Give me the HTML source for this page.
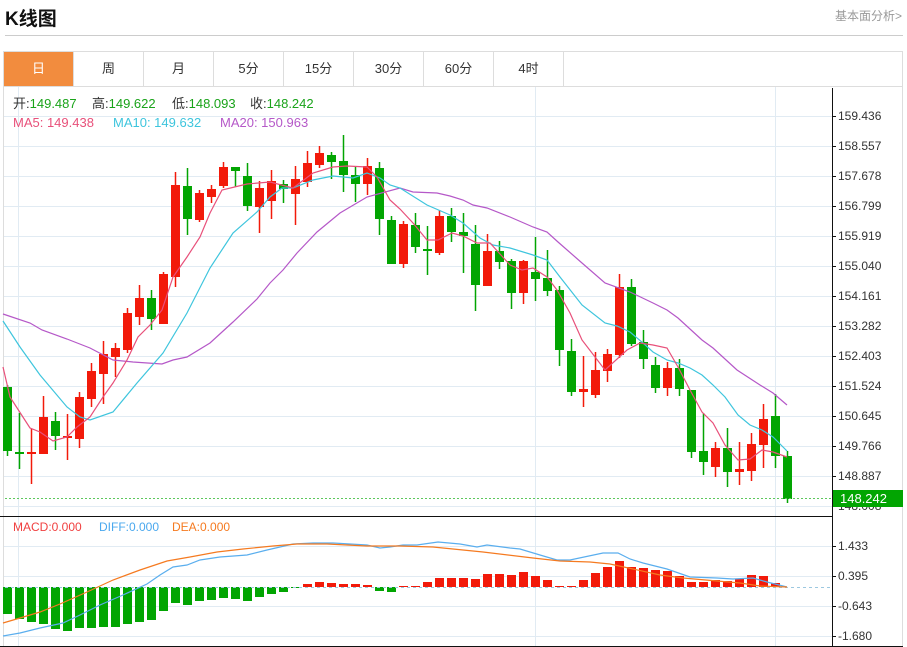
<!DOCTYPE html>
<html><head><meta charset="utf-8"><style>
*{margin:0;padding:0;box-sizing:border-box}
body{width:907px;height:647px;background:#fff;font-family:"Liberation Sans","Noto Sans CJK SC",sans-serif;position:relative;overflow:hidden}
.t{position:absolute;left:5px;top:4px;font-size:19px;font-weight:bold;color:#111}
.r{position:absolute;right:5px;top:7px;font-size:12px;color:#999}
.hl{position:absolute;left:5px;top:35px;width:898px;height:1px;background:#ccc}
.tabs{position:absolute;left:3px;top:51px;width:900px;height:36px;border:1px solid #ddd;border-bottom:1px solid #ddd}
.tab{position:absolute;top:0;height:34px;width:70px;line-height:34px;text-align:center;font-size:13px;color:#333;border-right:1px solid #ddd}
.on{background:#f28c3e;color:#fff}
</style></head><body>
<div class="t">K线图</div><div class="r">基本面分析&gt;</div><div class="hl"></div>
<div class="tabs">
<div class="tab on" style="left:0">日</div><div class="tab" style="left:70px">周</div><div class="tab" style="left:140px">月</div><div class="tab" style="left:210px">5分</div><div class="tab" style="left:280px">15分</div><div class="tab" style="left:350px">30分</div><div class="tab" style="left:420px">60分</div><div class="tab" style="left:490px">4时</div>
</div>
<svg width="907" height="647" style="position:absolute;left:0;top:0" font-family="Liberation Sans, Noto Sans CJK SC, sans-serif">
<g stroke="#e1ebf3" stroke-width="1">
<line x1="3.5" y1="87" x2="3.5" y2="647" stroke="#ddd"/><line x1="902.5" y1="87" x2="902.5" y2="647" stroke="#ddd"/>
<line x1="18.5" y1="87" x2="18.5" y2="646"/><line x1="535.5" y1="87" x2="535.5" y2="646"/><line x1="775.5" y1="87" x2="775.5" y2="646"/>
<line x1="4" y1="116.5" x2="832" y2="116.5"/><line x1="4" y1="146.5" x2="832" y2="146.5"/><line x1="4" y1="176.5" x2="832" y2="176.5"/><line x1="4" y1="206.5" x2="832" y2="206.5"/><line x1="4" y1="236.5" x2="832" y2="236.5"/><line x1="4" y1="266.5" x2="832" y2="266.5"/><line x1="4" y1="296.5" x2="832" y2="296.5"/><line x1="4" y1="326.5" x2="832" y2="326.5"/><line x1="4" y1="356.5" x2="832" y2="356.5"/><line x1="4" y1="386.5" x2="832" y2="386.5"/><line x1="4" y1="416.5" x2="832" y2="416.5"/><line x1="4" y1="446.5" x2="832" y2="446.5"/><line x1="4" y1="476.5" x2="832" y2="476.5"/><line x1="4" y1="506.5" x2="832" y2="506.5"/>
<line x1="4" y1="546.5" x2="832" y2="546.5"/><line x1="4" y1="576.5" x2="832" y2="576.5"/><line x1="4" y1="606.5" x2="832" y2="606.5"/><line x1="4" y1="636.5" x2="832" y2="636.5"/>
</g>
<g font-size="13">
<text x="13" y="108" fill="#333">开:<tspan fill="#1aa31a">149.487</tspan></text>
<text x="92" y="108" fill="#333">高:<tspan fill="#1aa31a">149.622</tspan></text>
<text x="172" y="108" fill="#333">低:<tspan fill="#1aa31a">148.093</tspan></text>
<text x="250" y="108" fill="#333">收:<tspan fill="#1aa31a">148.242</tspan></text>
<text x="13" y="127" fill="#e8507a">MA5: 149.438</text>
<text x="113" y="127" fill="#3ec5dd">MA10: 149.632</text>
<text x="220" y="127" fill="#b558c8">MA20: 150.963</text>
</g>
<g id="c"></g>
<polyline fill="none" stroke="#b558c8" stroke-width="1.2" points="3,314 30,323 42,330 67,339 90,348 113,360 133,362 162,364 173,360 187,357 210,343 233,322 257,299 270,283 283,270 297,253 317,232 340,213 367,197 400,188 413,192 437,193 450,196 463,200 473,205 487,208 510,217 533,227 547,232 558,242 582,263 605,283 630,292 653,303 667,310 678,318 702,340 713,348 737,370 760,385 773,393 787,405"/>
<polyline fill="none" stroke="#3ec5dd" stroke-width="1.2" points="3,321 20,347 40,375 67,407 80,417 90,420 113,412 137,383 163,353 187,313 210,268 233,233 257,212 270,197 282,188 293,188 313,180 333,176 353,178 367,173 380,178 390,185 400,188 427,205 450,215 463,223 480,238 493,245 510,248 533,255 547,260 560,277 582,305 605,323 617,326 630,332 643,343 653,352 667,360 678,363 690,368 702,375 713,385 725,397 738,415 750,425 762,430 773,437 787,451"/>
<polyline fill="none" stroke="#e8507a" stroke-width="1.2" points="3,367 10,397 30,428 40,432 53,441 67,437 77,427 90,417 103,397 113,383 127,360 138,337 150,325 162,310 173,277 187,257 200,237 210,213 222,190 247,184 270,182 293,188 313,173 333,167 347,166 367,167 377,177 390,200 400,209 413,223 427,240 438,240 452,233 463,236 477,243 490,243 510,265 522,270 533,268 547,277 557,290 570,313 582,340 605,370 627,350 640,343 653,345 667,348 678,367 690,390 702,412 713,423 725,445 738,460 750,459 762,450 773,452 787,457"/>
<line x1="5" y1="498.5" x2="832" y2="498.5" stroke="#5cc85c" stroke-dasharray="2,2"/>
<line x1="0" y1="516.5" x2="833" y2="516.5" stroke="#111"/>
<line x1="0" y1="646.5" x2="903" y2="646.5" stroke="#111"/>
<line x1="832.5" y1="88" x2="832.5" y2="647" stroke="#111"/>
<g font-size="12" fill="#333">
<text x="838" y="120">159.436</text><text x="838" y="150">158.557</text><text x="838" y="180">157.678</text><text x="838" y="210">156.799</text><text x="838" y="240">155.919</text><text x="838" y="270">155.040</text><text x="838" y="300">154.161</text><text x="838" y="330">153.282</text><text x="838" y="360">152.403</text><text x="838" y="390">151.524</text><text x="838" y="420">150.645</text><text x="838" y="450">149.766</text><text x="838" y="480">148.887</text><text x="838" y="510">148.008</text>
<text x="838" y="550">1.433</text><text x="838" y="580">0.395</text><text x="838" y="610">-0.643</text><text x="838" y="640">-1.680</text>
</g>
<g stroke="#111"><line x1="832" y1="116.5" x2="836" y2="116.5"/><line x1="832" y1="146.5" x2="836" y2="146.5"/><line x1="832" y1="176.5" x2="836" y2="176.5"/><line x1="832" y1="206.5" x2="836" y2="206.5"/><line x1="832" y1="236.5" x2="836" y2="236.5"/><line x1="832" y1="266.5" x2="836" y2="266.5"/><line x1="832" y1="296.5" x2="836" y2="296.5"/><line x1="832" y1="326.5" x2="836" y2="326.5"/><line x1="832" y1="356.5" x2="836" y2="356.5"/><line x1="832" y1="386.5" x2="836" y2="386.5"/><line x1="832" y1="416.5" x2="836" y2="416.5"/><line x1="832" y1="446.5" x2="836" y2="446.5"/><line x1="832" y1="476.5" x2="836" y2="476.5"/><line x1="832" y1="546.5" x2="836" y2="546.5"/><line x1="832" y1="576.5" x2="836" y2="576.5"/><line x1="832" y1="606.5" x2="836" y2="606.5"/><line x1="832" y1="636.5" x2="836" y2="636.5"/></g>
<rect x="833" y="490" width="70" height="17" fill="#02a502"/>
<text x="840" y="503" font-size="13" fill="#fff">148.242</text>
<g font-size="12">
<text x="13" y="531" fill="#f04040">MACD:0.000</text>
<text x="99" y="531" fill="#4aa8ee">DIFF:0.000</text>
<text x="172" y="531" fill="#f57a20">DEA:0.000</text>
</g>
<g id="m"></g>
<line x1="5" y1="587.5" x2="832" y2="587.5" stroke="#9cc8e0" stroke-dasharray="3,3"/>
<polyline fill="none" stroke="#5aaeee" stroke-width="1.2" points="3,636 20,633 40,628 63,623 80,615 100,605 123,595 147,584 160,575 173,567 187,565 200,560 220,557 247,555 267,550 293,544 313,543 333,543 367,545 380,548 390,547 403,545 417,545 438,542 460,544 477,547 487,545 510,548 520,549 540,555 557,560 570,560 603,553 618,553 630,559 643,563 667,569 690,577 717,578 733,579 753,578 767,582 787,587"/>
<polyline fill="none" stroke="#f57a20" stroke-width="1.2" points="3,623 20,618 40,612 60,604 87,592 113,580 140,570 167,561 190,557 217,552 243,549 273,546 297,544 327,544 367,546 400,546 433,547 483,552 533,558 560,561 590,562 610,564 633,569 660,575 683,578 717,581 740,583 760,586 787,587"/>
</svg>
<script>
var C=[
[7,'g',387,451,385,456],[19,'g',452,453,413,469],[31,'r',452,454,429,484],[43,'r',417,454,396,454],[55,'g',421,436,412,450],[67,'r',436,438,414,460],[79,'r',397,439,392,448],[91,'r',371,399,363,407],[103,'r',354,374,341,404],[115,'r',348,357,343,377],[127,'r',313,350,308,353],[139,'r',298,317,285,325],[151,'g',298,319,290,330],[163,'r',274,324,272,324],[175,'r',185,277,172,287],[187,'g',186,219,168,235],[199,'r',193,220,190,222],[211,'r',189,197,185,203],[223,'r',167,186,162,188],[235,'g',167,171,167,187],[247,'g',176,206,163,211],[259,'r',188,207,181,233],[271,'r',181,201,170,219],[283,'g',184,189,180,203],[295,'r',179,194,166,225],[307,'r',163,182,151,187],[319,'r',153,165,146,168],[331,'g',155,162,152,179],[343,'g',161,175,135,192],[355,'g',175,184,167,202],[367,'r',166,184,158,195],[379,'g',168,219,162,235],[391,'g',220,264,216,264],[403,'r',224,264,221,268],
[415,'g',225,247,213,253],[427,'g',249,251,226,275],[439,'r',216,253,210,255],[451,'g',216,232,208,242],[463,'g',232,236,213,273],[475,'g',244,285,225,311],[487,'r',251,286,234,286],[499,'g',251,262,241,269],[511,'g',261,293,259,309],[523,'r',261,293,260,304],[535,'g',272,279,237,301],[547,'g',278,291,250,296],[559,'g',290,350,286,366],[571,'g',351,392,339,396],[583,'r',389,392,356,407],[595,'r',370,395,352,398],[607,'r',354,371,349,382],[619,'r',287,355,274,358],[631,'g',287,344,279,346],[643,'g',342,359,330,369],[655,'g',365,388,357,393],[667,'r',368,388,362,396],[679,'g',368,389,359,396],[691,'g',390,452,390,458],[703,'g',451,462,413,475],[715,'r',448,467,442,477],[727,'g',448,472,428,487],[739,'r',469,472,442,485],[751,'r',444,471,433,481],[763,'r',419,445,404,468],[775,'g',416,456,394,468],[787,'g',456,499,451,503]];
var M=[614,619,622,624,629,631,628,628,627,627,624,622,620,611,603,605,601,600,598,599,601,597,594,592,588,584,582,583,584,584,585,591,592,586,586,582,578,578,578,579,574,574,575,572,576,580,586,586,580,573,567,561,567,568,570,571,576,582,582,580,581,579,575,576,583];
var ns='http://www.w3.org/2000/svg',g=document.getElementById('c'),m=document.getElementById('m');
function el(p,t,a){var e=document.createElementNS(ns,t);for(var k in a)e.setAttribute(k,a[k]);p.appendChild(e);}
C.forEach(function(c){var col=c[1]=='r'?'#f21a0a':'#02a502';
el(g,'line',{x1:c[0]+.5,x2:c[0]+.5,y1:c[4],y2:c[5],stroke:col,'stroke-width':1.5});
el(g,'rect',{x:c[0]-4,y:c[2],width:9,height:Math.max(2,c[3]-c[2]),fill:col});});
M.forEach(function(y,i){var x=7+12*i;var col=y>587?'#02a502':'#f21a0a';var t=Math.min(y,587),h=Math.abs(y-587);
el(m,'rect',{x:x-4,y:t,width:9,height:Math.max(1,h),fill:col});});
</script>
</body></html>
